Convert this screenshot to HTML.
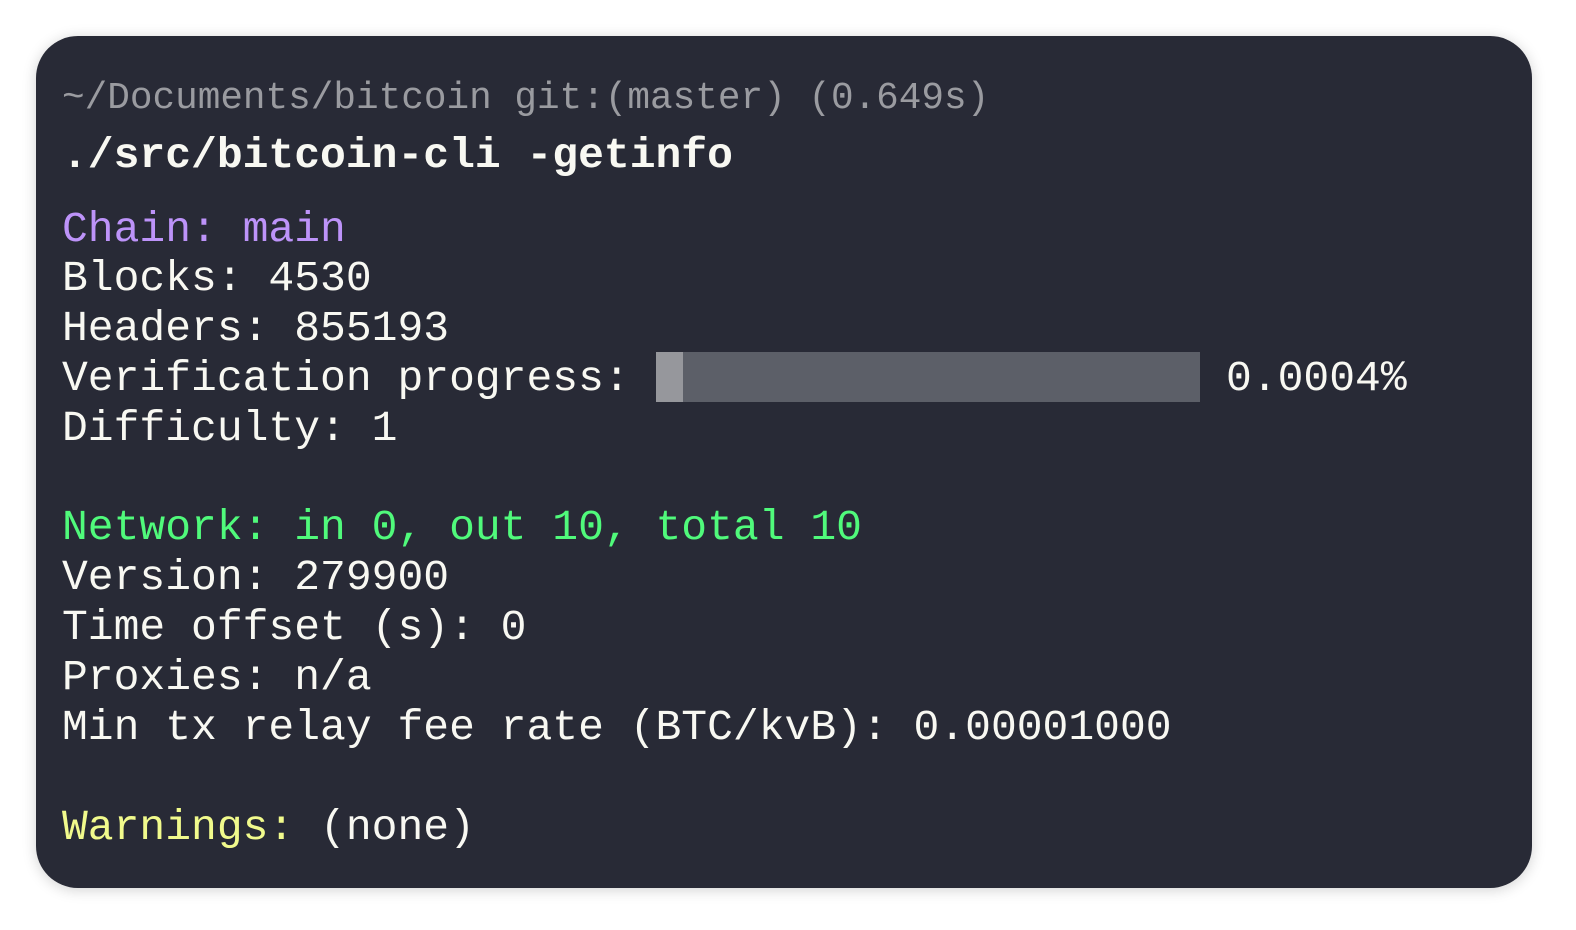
<!DOCTYPE html>
<html><head><meta charset="utf-8"><style>
body{margin:0;width:1576px;height:930px;background:#fff;overflow:hidden;position:relative}
.card{position:absolute;left:36px;top:36px;width:1496px;height:852px;background:#282a36;border-radius:42px;box-shadow:0 2px 14px rgba(0,0,0,.18)}
.l{position:absolute;left:62px;font-family:"Liberation Mono","DejaVu Sans Mono",monospace;font-size:43px;line-height:50px;height:50px;color:#f8f8f2;white-space:pre}
.g{color:#9a9ba0;font-size:37.7px}
.b{font-weight:bold}
.p{color:#bd93f9}.n{color:#50fa7b}.y{color:#f1fa8c}
.bar{position:absolute;left:656px;top:352px;width:544px;height:50px;background:#5c5f68}
.bar i{position:absolute;left:0;top:0;width:27px;height:50px;background:#96979c}
</style></head><body>
<div class="card"></div>
<div class="l g" style="top:74px">~/Documents/bitcoin git:(master) (0.649s)</div>
<div class="l b" style="top:131px">./src/bitcoin-cli -getinfo</div>
<div class="l p" style="top:205px">Chain: main</div>
<div class="l" style="top:254px">Blocks: 4530</div>
<div class="l" style="top:304px">Headers: 855193</div>
<div class="l" style="top:354px">Verification progress:</div>
<div class="bar"><i></i></div>
<div class="l" style="top:354px;left:1226px">0.0004%</div>
<div class="l" style="top:404px">Difficulty: 1</div>
<div class="l n" style="top:503px">Network: in 0, out 10, total 10</div>
<div class="l" style="top:553px">Version: 279900</div>
<div class="l" style="top:603px">Time offset (s): 0</div>
<div class="l" style="top:653px">Proxies: n/a</div>
<div class="l" style="top:703px">Min tx relay fee rate (BTC/kvB): 0.00001000</div>
<div class="l" style="top:803px"><span class="y">Warnings:</span> (none)</div>
</body></html>
